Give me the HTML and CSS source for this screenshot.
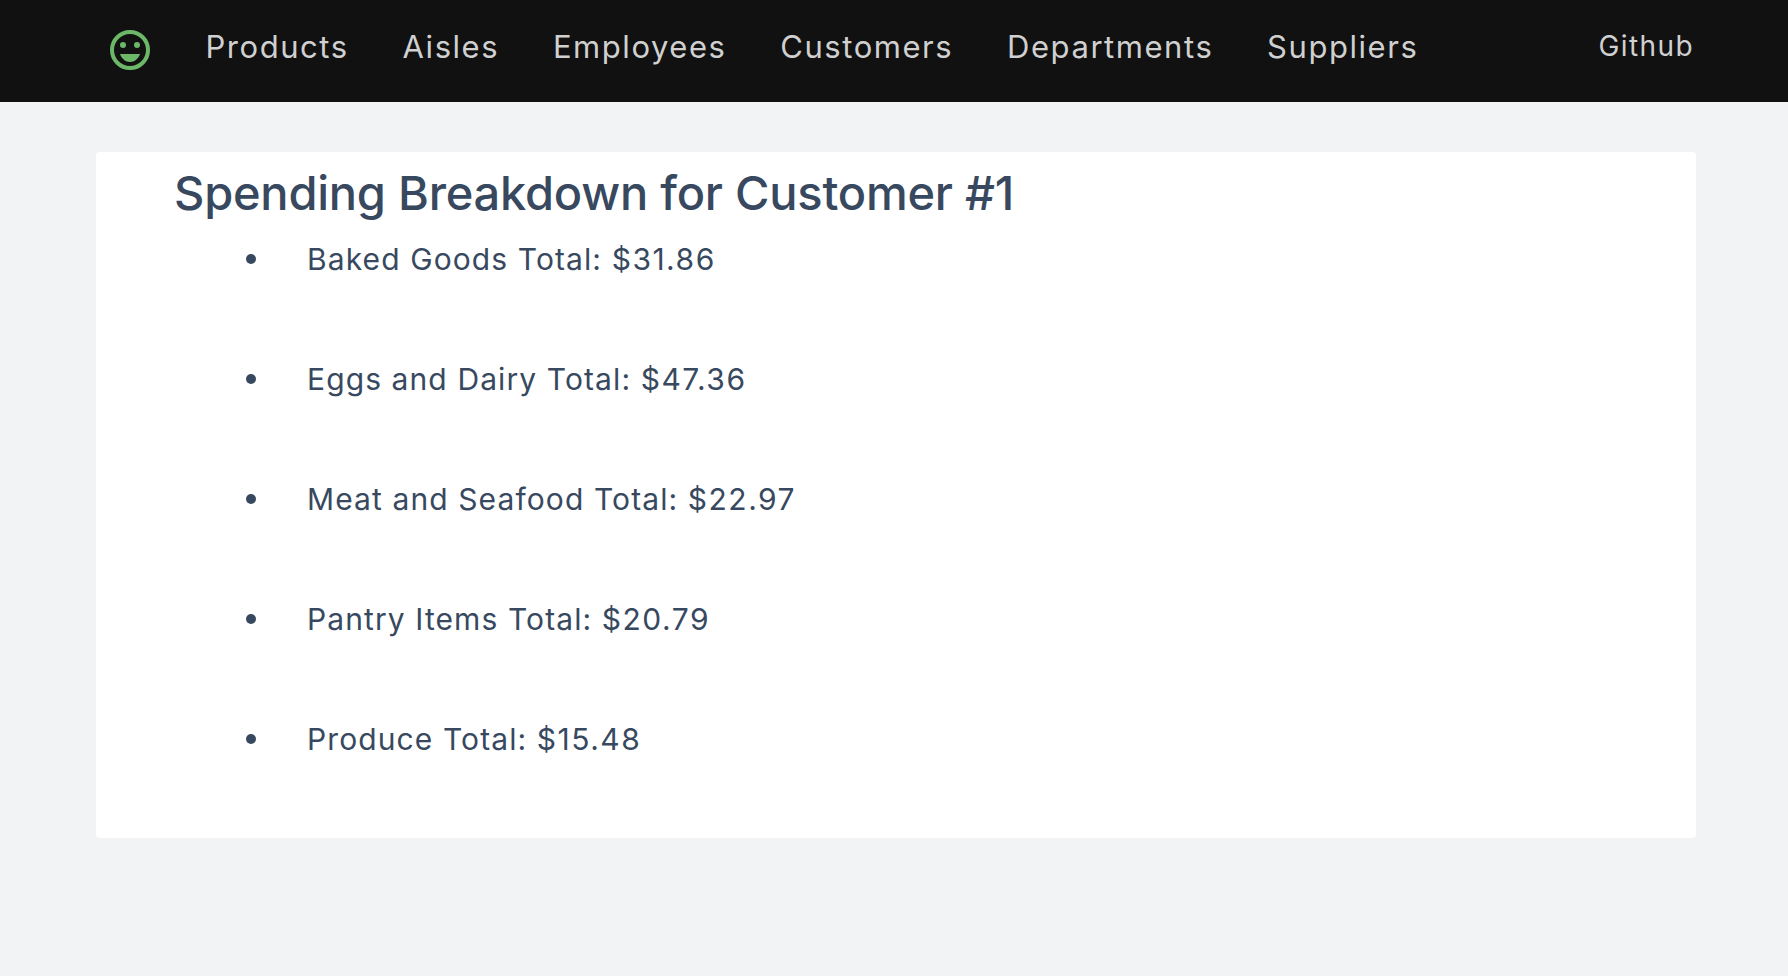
FILE: index.html
```html
<!DOCTYPE html>
<html lang="en">
<head>
<meta charset="utf-8">
<title>Spending Breakdown</title>
<link rel="stylesheet" href="styles.css">
</head>
<body>
<header class="navbar">
  <a class="brand" aria-label="Home">
    <svg class="brand-icon" viewBox="0 0 24 24">
      <circle cx="12" cy="12" r="9" fill="none" stroke="currentColor" stroke-width="2"/>
      <circle cx="8.5" cy="9.5" r="1.5" fill="currentColor"/>
      <circle cx="15.5" cy="9.5" r="1.5" fill="currentColor"/>
      <path d="M12 18c2.28 0 4.22-1.66 5-4H7c.78 2.34 2.72 4 5 4z" fill="currentColor"/>
    </svg>
  </a>
  <nav class="links">
    <a class="link">Products</a>
    <a class="link">Aisles</a>
    <a class="link">Employees</a>
    <a class="link">Customers</a>
    <a class="link">Departments</a>
    <a class="link">Suppliers</a>
  </nav>
  <a class="github">Github</a>
</header>
<main class="card">
  <h1 class="title">Spending Breakdown for Customer #1</h1>
  <ul class="totals">
    <li class="total"><span>Baked Goods Total: <span class="amount">$31.86</span></span></li>
    <li class="total"><span>Eggs and Dairy Total: <span class="amount">$47.36</span></span></li>
    <li class="total"><span>Meat and Seafood Total: <span class="amount">$22.97</span></span></li>
    <li class="total"><span>Pantry Items Total: <span class="amount">$20.79</span></span></li>
    <li class="total"><span>Produce Total: <span class="amount">$15.48</span></span></li>
  </ul>
</main>
</body>
</html>
```
FILE: styles.css
```css
* { box-sizing: border-box; }
body {
  margin: 0;
  background: #f1f3f5;
  color: #38495f;
  font-family: Inter, "Liberation Sans", sans-serif;
}
.navbar {
  display: flex;
  align-items: flex-start;
  height: 102px;
  padding: 26px 94px 0 106px;
  background: #111;
  color: #d0d0d0;
}
.brand { color: #6cb868; }
.brand-icon { display: block; width: 48px; height: 48px; }
.links { display: flex; gap: 53.8px; margin-left: 51.5px; }
.link { font-size: 31px; line-height: 42px; letter-spacing: 1.55px; }
.github {
  margin-left: auto;
  font-size: 28px;
  line-height: 40px;
  letter-spacing: 1.4px;
}
.card {
  width: 1600px;
  height: 686px;
  margin: 50px 0 0 96px;
  padding: 11px 78px 0;
  border-radius: 4px;
  background: #fff;
}
.title {
  margin: 0;
  font-size: 47px;
  font-weight: 500;
  line-height: 60px;
  letter-spacing: -0.23px;
  white-space: nowrap;
}
.totals { margin: 0; padding: 0; list-style: none; }
.total {
  display: flex;
  align-items: center;
  gap: 51px;
  height: 120px;
  padding: 0 0 49px 72px;
  font-size: 30px;
  letter-spacing: 1.1px;
}
.amount { letter-spacing: 1.5px; }
.total::before {
  content: "";
  width: 10px;
  height: 10px;
  border-radius: 50%;
  background: currentColor;
}
```
